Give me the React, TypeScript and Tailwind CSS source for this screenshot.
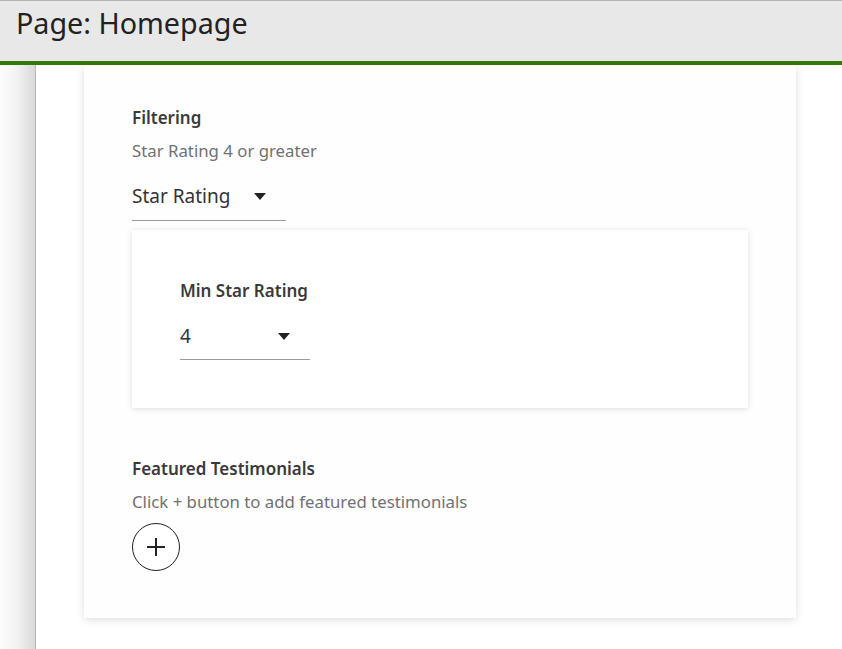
function Caret() {
	return (
		<svg width="12" height="7" viewBox="0 0 12 7" className="fill-[#222]">
			<path d="M0 0h12L6 7z" />
		</svg>
	);
}

function SelectBox(props: { value: string; width: string; pad: string }) {
	return (
		<div
			className={`flex items-center justify-between border-b border-[#9a9a9a] pt-[4px] pr-[20px] ${props.pad} ${props.width}`}
		>
			<span className="text-[19px] text-[#333] leading-[24px]">{props.value}</span>
			<Caret />
		</div>
	);
}

function Section(props: { title: string; hint?: string; children?: React.ReactNode }) {
	return (
		<div className="flex flex-col">
			<h3 className="text-[17px] font-semibold text-[#3a3a3a] leading-[20px]">{props.title}</h3>
			{props.hint && (
				<p className="text-[16.8px] text-[#717171] leading-[20px] mt-[13px]">{props.hint}</p>
			)}
			{props.children}
		</div>
	);
}

export default function App() {
	return (
		<div
			className="w-[842px] h-[649px] overflow-hidden flex flex-col bg-[#fdfdfd]"
			style={{ fontFamily: '"Noto Sans", "Open Sans", sans-serif' }}
		>
			<header className="h-[65px] shrink-0 bg-[#e8e8e8] border-t border-[#b4b4b4] border-b-[4px] border-b-[#367800] flex items-center px-[16px]">
				<h1 className="text-[28.7px] text-[#222] leading-none -mt-[16px]">Page: Homepage</h1>
			</header>
			<div className="flex flex-1 min-h-0">
				<div className="w-[36px] shrink-0 bg-gradient-to-r from-[#fdfdfd] via-[#f2f2f2] to-[#d9d9d9] border-r border-[#b8b8b8]" />
				<div className="flex-1 bg-white pl-[48px] pr-[46px]">
					<div className="w-[712px] h-[553px] bg-[#fefefe] shadow-[0_2px_8px_rgba(0,0,0,0.13)] px-[48px] pt-[43px]">
						<Section title="Filtering" hint="Star Rating 4 or greater">
							<div className="mt-[19px]">
								<SelectBox value="Star Rating" width="w-[154px]" pad="pb-[12px]" />
							</div>
						</Section>
						<div className="mt-[9px] h-[178px] bg-white shadow-[0_1px_6px_rgba(0,0,0,0.13)] px-[48px] pt-[51px]">
							<Section title="Min Star Rating">
								<div className="mt-[19px]">
									<SelectBox value="4" width="w-[130px]" pad="pb-[11px]" />
								</div>
							</Section>
						</div>
						<div className="mt-[51px]">
							<Section title="Featured Testimonials" hint="Click + button to add featured testimonials">
								<button className="mt-[11px] w-[48px] h-[48px] rounded-full border border-[#222] flex items-center justify-center bg-white">
									<svg width="20" height="20" viewBox="0 0 20 20" className="stroke-[#222]" strokeWidth="2">
										<path d="M10 1v18M1 10h18" />
									</svg>
								</button>
							</Section>
						</div>
					</div>
				</div>
			</div>
		</div>
	);
}
